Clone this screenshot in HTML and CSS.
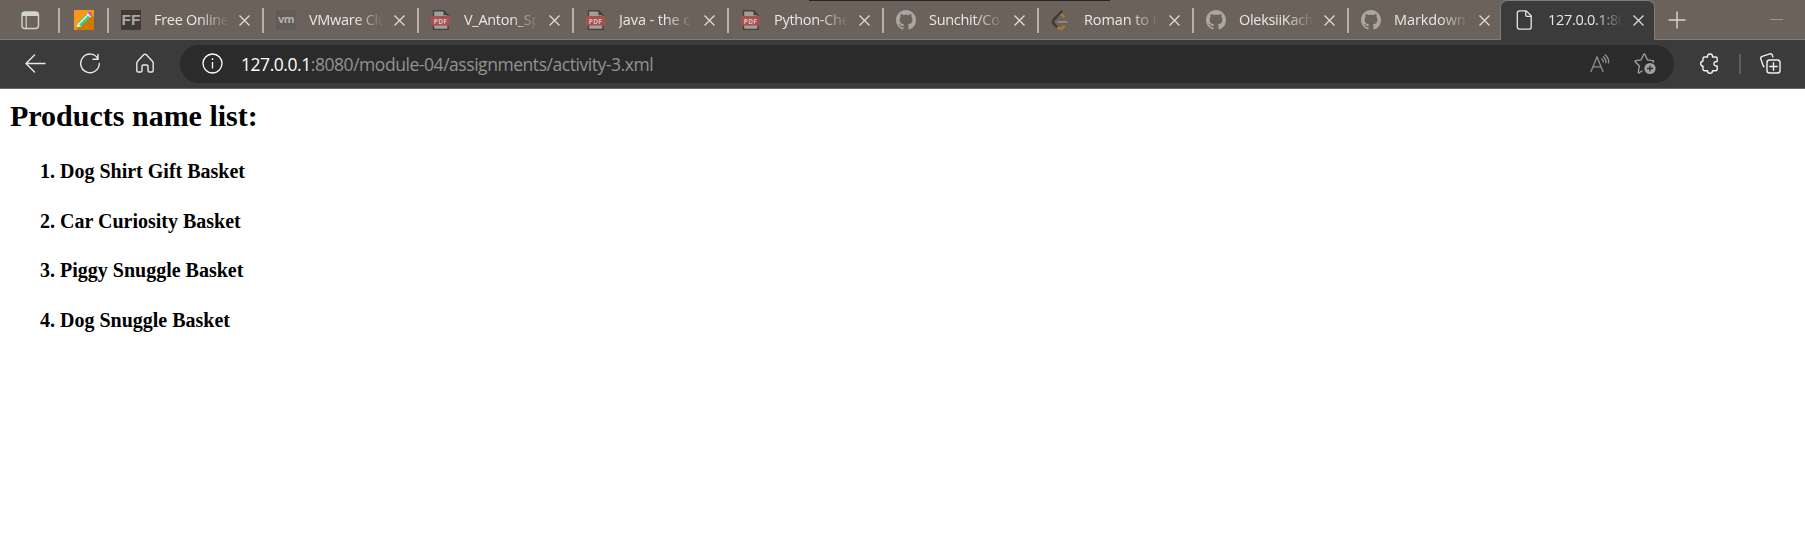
FILE: index.html
```html
<!DOCTYPE html>
<html lang="en">
<head>
<meta charset="utf-8">
<title>Products</title>
<link rel="stylesheet" href="styles.css">
</head>
<body>
<svg class="defs" width="0" height="0">
  <symbol id="close" viewBox="0 0 11 11"><path d="M.5.5l10 10M10.500.5l-10 10" fill="none" stroke="#dedcda" stroke-width="1.300"/></symbol>
  <symbol id="pdf" viewBox="0 0 20 20">
    <path d="M2.500.7h10l4.500 4.500v14.200h-14.500z" fill="#a29e9a" stroke="#45403c" stroke-width="1.400"/>
    <path d="M12.500 0v5.200h5z" fill="#45403c"/>
    <rect x="0" y="6" width="19" height="9.500" rx="1" fill="#a8504d"/>
    <text x="9.500" y="13.600" text-anchor="middle" class="pdf-text">PDF</text>
  </symbol>
  <symbol id="github" viewBox="0 0 16 16"><path fill="#aaa6a2" d="M8 0C3.580 0 0 3.580 0 8c0 3.540 2.290 6.530 5.470 7.590.4.070.55-.17.55-.38 0-.19-.01-.82-.01-1.490-2.010.37-2.530-.49-2.690-.94-.09-.23-.48-.94-.82-1.130-.28-.15-.68-.52-.01-.53.63-.01 1.080.58 1.230.82.72 1.210 1.870.87 2.330.66.07-.52.28-.87.51-1.070-1.780-.2-3.640-.89-3.640-3.950 0-.87.31-1.590.82-2.150-.08-.2-.36-1.020.08-2.120 0 0 .67-.21 2.200.82.64-.18 1.320-.27 2-.27s1.360.09 2 .27c1.530-1.040 2.200-.82 2.200-.82.44 1.100.16 1.920.08 2.120.51.56.82 1.270.82 2.150 0 3.070-1.870 3.750-3.650 3.950.29.25.54.73.54 1.480 0 1.070-.01 1.930-.01 2.200 0 .21.15.46.55.38A8.010 8.010 0 0016 8c0-4.420-3.580-8-8-8z"/></symbol>
</svg>

<header class="browser">
  <div class="tabstrip">
    <div class="tab-actions">
      <svg width="19" height="19" viewBox="0 0 19 19"><rect x="1" y="1" width="16.500" height="16.500" rx="3" fill="none" stroke="#d4d2cf" stroke-width="1.400"/><path d="M1 5V3.500A2.500 2.500 0 013.500 1H15a2.500 2.500 0 012.500 2.500V5H1z" fill="#d4d2cf"/><path d="M5.200 5v12.500" stroke="#d4d2cf" stroke-width="1.200"/></svg>
    </div>
    <div class="pinned">
      <svg width="20" height="20" viewBox="0 0 20 20"><rect width="20" height="20" fill="#fb9718"/><path d="M17.500 5L20 7.500V20H3.500L1.500 18z" fill="#d07800"/><path d="M2.500 17.500l1.200-4.500L13.500 3.500l3.200 3.200-9.500 9.500z" fill="#2fd08b"/><path d="M4.800 14l9.700-9.700" stroke="#e4faf2" stroke-width="1.300"/><path d="M2.500 17.500l1.200-4.500 3.500 3.200z" fill="#f5ead2"/><path d="M12.500 4.200l1.600-1.600 3.500 3.500L16 7.700z" fill="#d9dce8"/><path d="M13.900 2.800l.8-.6q1.300-.5 2.400.7t.8 2.400l-.7.900z" fill="#ba4bb8"/></svg>
    </div>
    <div class="tab"><span class="favicon ff">FF</span><span class="tab-title">Free Online</span><svg class="close"><use href="#close"/></svg></div>
    <div class="tab"><span class="favicon vm">vm</span><span class="tab-title">VMware Clo</span><svg class="close"><use href="#close"/></svg></div>
    <div class="tab"><svg class="favicon"><use href="#pdf"/></svg><span class="tab-title">V_Anton_Sp</span><svg class="close"><use href="#close"/></svg></div>
    <div class="tab"><svg class="favicon"><use href="#pdf"/></svg><span class="tab-title wide">Java - the c</span><svg class="close"><use href="#close"/></svg></div>
    <div class="tab"><svg class="favicon"><use href="#pdf"/></svg><span class="tab-title">Python-Che</span><svg class="close"><use href="#close"/></svg></div>
    <div class="tab"><svg class="favicon"><use href="#github"/></svg><span class="tab-title">Sunchit/Co</span><svg class="close"><use href="#close"/></svg></div>
    <div class="tab"><svg class="favicon" viewBox="0 0 20 20" fill="none" stroke-width="2.300"><path d="M6.500 5.500q2.500-2.300 5.300 0l1.700 1.600M6 17q3.200 3.200 6.200.4l1.500-1.500" stroke="#ab7932"/><path d="M11.300.8L2.800 9.600q-1.800 2.100 0 4.300L6.300 17.300" stroke="#3c3835"/><path d="M6.300 11.900h10.200" stroke="#8e8a85" stroke-width="1.800"/></svg><span class="tab-title wide">Roman to I</span><svg class="close"><use href="#close"/></svg></div>
    <div class="tab"><svg class="favicon"><use href="#github"/></svg><span class="tab-title">OleksiiKach</span><svg class="close"><use href="#close"/></svg></div>
    <div class="tab"><svg class="favicon"><use href="#github"/></svg><span class="tab-title wide">Markdown</span><svg class="close"><use href="#close"/></svg></div>
    <div class="tab active"><svg class="favicon" viewBox="0 0 20 20" fill="none" stroke="#e4e4e4" stroke-width="1.300"><path d="M4.500.8h6.700l5 5V17a2.200 2.200 0 01-2.200 2.200H4.500A2.200 2.200 0 012.300 17V3A2.200 2.200 0 014.500.8z"/><path d="M10.700.8V5q0 1.300 1.300 1.300h4.200"/></svg><span class="tab-title">127.0.0.1:80</span><svg class="close"><use href="#close"/></svg></div>
    <svg class="new-tab" width="18" height="18"><path d="M9 .5v17M.5 9h17" stroke="#d8d6d4" stroke-width="1.400"/></svg>
    <span class="minimize"></span>
    <div class="top-edge"></div>
  </div>

  <nav class="toolbar">
    <svg class="back" width="21" height="19" fill="none" stroke="#e8e8e8" stroke-width="1.400" stroke-linecap="round" stroke-linejoin="round"><path d="M9.500 1L1 9.500 9.500 18M1 9.500h19"/></svg>
    <svg class="reload" width="22" height="22" fill="none" stroke="#e8e8e8" stroke-width="1.400" stroke-linecap="round"><path d="M18.800 5.300A9.300 9.300 0 1020.300 10.500M19 1.500v4.700h-5"/></svg>
    <svg class="home" width="20" height="21" fill="none" stroke="#e8e8e8" stroke-width="1.400" stroke-linejoin="round"><path d="M2.600 8.200l6-6.400q1.400-1.300 2.800 0l6 6.400q.8.900.8 2v7.300q0 1.500-1.500 1.500h-2.400q-1.300 0-1.300-1.300v-4.400q0-1.300-1.300-1.300H8.300q-1.300 0-1.300 1.300v4.400q0 1.300-1.300 1.300H3.300q-1.500 0-1.500-1.500v-7.300q0-1.100.8-2z"/></svg>
    <div class="address">
      <svg width="21" height="21"><circle cx="10.500" cy="10.500" r="9.500" fill="none" stroke="#fff" stroke-width="1.300"/><path d="M10.500 9v6.500" stroke="#fff" stroke-width="1.300"/><circle cx="10.500" cy="6.200" r=".9" fill="#fff"/></svg>
      <span class="url"><b>127.0.0.1</b>:8080/module-04/assignments/activity-3.xml</span>
      <svg class="read" width="20" height="20" fill="none" stroke="#8f8f8f" stroke-width="1.300"><path d="M.8 18L7 3l6.200 15M3 12.800h8M11.500 4.500q2 1.700 1.800 4M13 2.200q3.300 2.800 2.900 7M14.800.5q4.600 3.700 3.700 9"/></svg>
      <svg class="star" width="23" height="22"><path d="M8.500 17.800L5 19.800q-1 .4-.8-.7l1.200-6.100L1.200 8.800q-.6-.9.400-1.100l5.400-.7 2.700-5.500q.6-1 1.200 0L13.500 7l5.500.7q1.100.2.500 1.100l-.7.700" fill="none" stroke="#a0a0a0" stroke-width="1.300"/><circle cx="16" cy="15.500" r="5.600" fill="#a0a0a0"/><path d="M16 12.500v6M13 15.500h6" stroke="#2b2b2b" stroke-width="1.300"/></svg>
    </div>
    <svg class="puzzle" width="20" height="21" fill="none" stroke="#f0f0f0" stroke-width="1.400" stroke-linejoin="round"><path d="M4.500 4h3q-.3-3 2.500-3t2.500 3h3.200q1.500 0 1.500 1.500v3q-3.200-.3-3.200 2.200t3.200 2.200v3.300q0 1.500-1.500 1.500h-3.200q0 2.600-2.500 2.600t-2.500-2.600h-3Q3 17.700 3 16.200v-2.900q-2.300-.3-2.300-2.600T3 8V5.500Q3 4 4.500 4z"/></svg>
    <span class="divider"></span>
    <svg class="collections" width="21" height="21" fill="none" stroke="#f0f0f0" stroke-width="1.400" stroke-linecap="round"><rect x="7" y="7" width="13" height="13" rx="2.500"/><path d="M13.500 9.800v7.400M9.800 13.500h7.400M4 13.800Q3.200 13.200 2.900 12L.8 5.800Q.3 3.900 2.200 3.300l7.600-2.400q1.900-.5 2.600 1.300l.4 1.600"/></svg>
  </nav>
</header>

<main class="document">
  <h1>Products name list:</h1>
  <ol>
    <li><h4>Dog Shirt Gift Basket</h4></li>
    <li><h4>Car Curiosity Basket</h4></li>
    <li><h4>Piggy Snuggle Basket</h4></li>
    <li><h4>Dog Snuggle Basket</h4></li>
  </ol>
</main>
</body>
</html>
```
FILE: styles.css
```css
* { box-sizing: border-box; }
body { margin: 0; background: #fff; overflow: hidden; }
svg { display: block; flex: none; }
.defs { position: absolute; }

.browser { font-family: "Open Sans", "Noto Sans", sans-serif; }

.tabstrip {
  position: relative;
  display: flex;
  height: 40px;
  background: #6a625b;
  border-bottom: 1px solid #817b75;
}
.top-edge {
  position: absolute;
  top: 0;
  left: 809px;
  width: 301px;
  height: 1px;
  background: #282624;
}
.tab-actions { width: 58px; padding: 11px 0 0 21px; }
.pinned { width: 49px; padding: 10px 0 0 16px; }
.tab-actions, .pinned, .tab { flex: none; }
.pinned, .tab {
  background: linear-gradient(#b5b0aa, #b5b0aa) 0 8px / 2px 25px no-repeat;
}
.tab {
  display: flex;
  align-items: flex-start;
  width: 155px;
  padding-top: 10px;
  padding-left: 14px;
}
.favicon { flex: none; width: 20px; height: 20px; }
.ff, .vm { text-align: center; font-weight: 700; overflow: hidden; }
.ff { background: #3f3a36; color: #aaa6a1; font: 700 15.500px/20px "Liberation Sans", sans-serif; }
.vm { background: #615c57; color: #b5b2ae; font-size: 11px; line-height: 17px; letter-spacing: -0.5px; }
.pdf-text { font: 700 6.500px "Open Sans", sans-serif; fill: #d4c4c2; letter-spacing: .3px; }
.tab-title {
  flex: none;
  width: 75px;
  margin: 0 10px 0 13px;
  overflow: hidden;
  white-space: nowrap;
  color: #e9e7e5;
  font-size: 14.500px;
  line-height: 20px;
  letter-spacing: -0.3px;
  -webkit-mask-image: linear-gradient(90deg, #000 62%, transparent 100%);
  mask-image: linear-gradient(90deg, #000 62%, transparent 100%);
}
.tab-title.wide { letter-spacing: -0.1px; }
.close { width: 11px; height: 11px; margin-top: 5px; }

.tab.active {
  position: relative;
  width: 155px;
  height: 40px;
  margin-left: -2px;
  background: #3b3b3b;
  border: 1px solid #817b75;
  border-bottom: 0;
  border-radius: 7px 7px 0 0;
  padding-top: 9px;
  padding-left: 14px;
}
.new-tab { margin: 11px 0 0 13px; }
.minimize { width: 13px; height: 1px; margin: 19px 22px 0 auto; background: #9b958f; }

.toolbar {
  display: flex;
  align-items: center;
  height: 49px;
  padding: 0 12px 1px 25px;
  background: #3b3b3b;
  border-bottom: 1px solid #666;
}
.reload { margin-left: 33px; }
.home { margin-left: 34px; }
.address {
  display: flex;
  align-items: center;
  width: 1494px;
  height: 38px;
  margin-left: 25px;
  padding: 0 17px 0 22px;
  border-radius: 19px;
  background: #2b2b2b;
}
.url {
  margin-left: 18px;
  color: #939393;
  font-size: 17.500px;
  line-height: 24px;
  letter-spacing: -0.450px;
  white-space: nowrap;
}
.url b { color: #fff; font-weight: 400; }
.read { margin-left: auto; }
.star { margin-left: 24px; }
.puzzle { margin-left: 26px; }
.divider { width: 2px; height: 20px; margin-left: 19px; background: #5c5c5c; }
.collections { margin-left: 19px; }

.document {
  padding: 10px;
  color: #000;
  font-family: "Liberation Serif", "Times New Roman", serif;
}
h1 { margin: 0 0 27px; font-size: 30px; line-height: 34px; }
ol { margin: 0; padding-left: 50px; font-size: 20px; font-weight: 700; }
h4 { margin: 0 0 26.500px; font-size: 20px; line-height: 23px; }
```
